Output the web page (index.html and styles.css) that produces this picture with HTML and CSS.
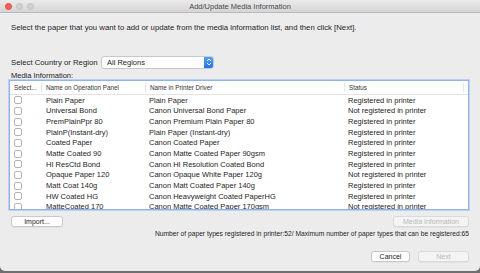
FILE: index.html
```html
<!DOCTYPE html>
<html lang="en">
  <head>
    <meta charset="UTF-8" />
    <title>Add/Update Media Information</title>
    <link rel="stylesheet" href="styles.css">
  </head>
  <body>
    <div class="window">
      <div class="titlebar">
        <div class="lights">
          <span class="light red"></span>
          <span class="light"></span>
          <span class="light"></span>
        </div>
        <div class="title">Add/Update Media Information</div>
      </div>

      <div class="content">
        <p class="intro">Select the paper that you want to add or update from the media information list, and then click [Next].</p>

        <div class="region">
          <span class="region-label">Select Country or Region</span>
          <div class="select">
            <span>All Regions</span>
            <span class="stepper">
              <svg width="6" height="10" viewBox="0 0 6 10">
                <path d="M1 4 L3 2 L5 4 M1 6 L3 8 L5 6" fill="none" stroke="#fff" stroke-width="1"/>
              </svg>
            </span>
          </div>
        </div>

        <div class="list-label">Media Information:</div>

        <div class="table">
          <div class="thead">
            <div class="th">Select...</div>
            <div class="th">Name on Operation Panel</div>
            <div class="th">Name in Printer Driver</div>
            <div class="th">Status</div>
          </div>
          <div class="tbody">
            <div class="tr"><div class="td"><span class="check"></span></div><div class="td">Plain Paper</div><div class="td">Plain Paper</div><div class="td">Registered in printer</div></div>
            <div class="tr"><div class="td"><span class="check"></span></div><div class="td">Universal Bond</div><div class="td">Canon Universal Bond Paper</div><div class="td">Not registered in printer</div></div>
            <div class="tr"><div class="td"><span class="check"></span></div><div class="td">PremPlainPpr 80</div><div class="td">Canon Premium Plain Paper 80</div><div class="td">Registered in printer</div></div>
            <div class="tr"><div class="td"><span class="check"></span></div><div class="td">PlainP(Instant-dry)</div><div class="td">Plain Paper (Instant-dry)</div><div class="td">Registered in printer</div></div>
            <div class="tr"><div class="td"><span class="check"></span></div><div class="td">Coated Paper</div><div class="td">Canon Coated Paper</div><div class="td">Registered in printer</div></div>
            <div class="tr"><div class="td"><span class="check"></span></div><div class="td">Matte Coated 90</div><div class="td">Canon Matte Coated Paper 90gsm</div><div class="td">Registered in printer</div></div>
            <div class="tr"><div class="td"><span class="check"></span></div><div class="td">HI ResCtd Bond</div><div class="td">Canon HI Resolution Coated Bond</div><div class="td">Registered in printer</div></div>
            <div class="tr"><div class="td"><span class="check"></span></div><div class="td">Opaque Paper 120</div><div class="td">Canon Opaque White Paper 120g</div><div class="td">Not registered in printer</div></div>
            <div class="tr"><div class="td"><span class="check"></span></div><div class="td">Matt Coat 140g</div><div class="td">Canon Matt Coated Paper 140g</div><div class="td">Registered in printer</div></div>
            <div class="tr"><div class="td"><span class="check"></span></div><div class="td">HW Coated HG</div><div class="td">Canon Heavyweight Coated PaperHG</div><div class="td">Registered in printer</div></div>
            <div class="tr"><div class="td"><span class="check"></span></div><div class="td">MatteCoated 170</div><div class="td">Canon Matte Coated Paper 170gsm</div><div class="td">Not registered in printer</div></div>
          </div>
        </div>

        <div class="table-actions">
          <button class="btn import-btn">Import...</button>
          <button class="btn media-btn" disabled>Media Information</button>
        </div>

        <div class="count">Number of paper types registered in printer:52/ Maximum number of paper types that can be registered:65</div>

        <div class="footer">
          <button class="btn cancel-btn">Cancel</button>
          <button class="btn next-btn" disabled>Next</button>
        </div>
      </div>
    </div>
  </body>
</html>
```

FILE: styles.css
```css
* {
    margin: 0;
    padding: 0;
    box-sizing: border-box;
}

body {
    font-family: 'Liberation Sans', Arial, sans-serif;
    background: #6f6f6f;
    color: #1e1e1e;
    width: 480px;
    height: 273px;
    overflow: hidden;
}

.window {
    width: 480px;
    height: 271px;
    background: #ececec;
    border-radius: 0 0 5px 5px;
    overflow: hidden;
}

/* title bar */
.titlebar {
    height: 13px;
    background: linear-gradient(#ebebeb, #d5d5d5);
    border-bottom: 1px solid #b9b9b9;
    position: relative;
}

.lights {
    display: flex;
    gap: 4px;
    padding: 3px 0 0 5px;
}

.light {
    width: 7px;
    height: 7px;
    border-radius: 50%;
    background: #d0d0d0;
    border: 1px solid #c2c2c2;
}

.light.red {
    background: #fc5f57;
    border-color: #e2463f;
}

.title {
    position: absolute;
    top: 0;
    left: 0;
    right: 0;
    text-align: center;
    font-size: 7.5px;
    line-height: 13px;
    color: #4a4a4a;
}

.content {
    padding: 10px 11px 0 9px;
}

.intro {
    font-size: 7.75px;
    line-height: 10px;
    padding-left: 2px;
}

/* region select */
.region {
    display: flex;
    align-items: center;
    margin-top: 22px;
    height: 14px;
    padding-left: 2px;
}

.region-label {
    font-size: 7.75px;
    width: 90px;
}

.select {
    display: flex;
    align-items: center;
    justify-content: space-between;
    width: 113px;
    height: 13px;
    background: #fff;
    border: 1px solid #c8c8c8;
    border-radius: 3px;
    font-size: 7.5px;
    padding-left: 5px;
    overflow: hidden;
}

.stepper {
    width: 9px;
    height: 13px;
    background: linear-gradient(#5aa3fb, #1a6ff0);
    display: flex;
    align-items: center;
    justify-content: center;
}

.list-label {
    font-size: 7.5px;
    line-height: 9px;
    margin-top: 2px;
    padding-left: 2px;
}

/* table */
.table {
    height: 130px;
    background: #fff;
    border: 1px solid #8fb3ea;
    box-shadow: 0 0 0 1px #b9d1f4;
    overflow: hidden;
}

.thead {
    display: grid;
    grid-template-columns: 32px 104px 199px 119px;
    height: 14px;
    border-bottom: 1px solid #e3e3e3;
    align-items: center;
}

.th {
    font-size: 6.3px;
    color: #333;
    padding-left: 4px;
    border-right: 1px solid #e6e6e6;
    line-height: 9px;
    white-space: nowrap;
    overflow: hidden;
}

.tbody .tr {
    display: grid;
    grid-template-columns: 32px 104px 199px 119px;
    height: 10.67px;
    align-items: center;
}

.td {
    font-size: 7.5px;
    padding-left: 4px;
    white-space: nowrap;
}

.td:nth-child(3),
.td:nth-child(4) {
    padding-left: 3px;
}

.check {
    display: block;
    width: 8px;
    height: 8px;
    border: 1px solid #b5b5b5;
    border-radius: 2px;
    background: #fff;
}

/* buttons */
.btn {
    font-family: 'Liberation Sans', Arial, sans-serif;
    font-size: 7px;
    height: 11px;
    background: #fff;
    border: 1px solid #c9c9c9;
    border-radius: 3px;
    color: #222;
    box-shadow: 0 0.5px 0 rgba(0,0,0,0.08);
}

.btn:disabled {
    background: #f4f4f4;
    color: #b8b8b8;
    border-color: #dadada;
}

.table-actions {
    display: flex;
    justify-content: space-between;
    margin-top: 6px;
    padding-left: 2px;
}

.import-btn {
    width: 52px;
}

.media-btn {
    width: 76px;
}

.count {
    font-size: 6.7px;
    text-align: right;
    margin-top: 3px;
    line-height: 8px;
}

.footer {
    display: flex;
    justify-content: flex-end;
    gap: 8px;
    margin-top: 13px;
}

.cancel-btn {
    width: 39px;
}

.next-btn {
    width: 51px;
}
```
